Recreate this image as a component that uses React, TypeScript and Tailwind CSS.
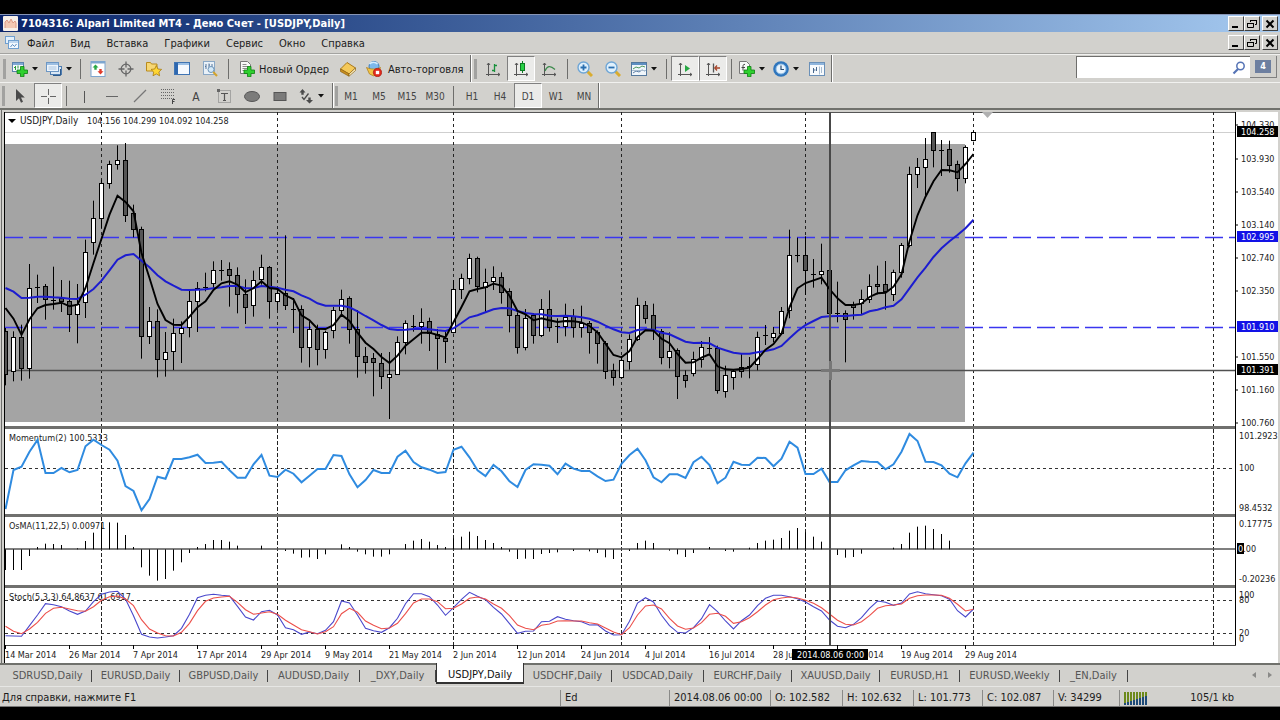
import type { ReactNode } from 'react';
import { clsx } from 'clsx';

type Kind = 'up' | 'down' | 'doji';
type Candle = [high: number, top: number, bottom: number, low: number, kind: Kind];

const STEP = 8;

// All series are stored at three units per pixel, measured down from the screen top of their block
const CANDLES: Candle[] = [
  [660, 670, 800, 832, 'down'], [670, 688, 790, 820, 'up'], [650, 688, 782, 818, 'down'], [468, 541, 782, 812, 'up'],
  [500, 538, 538, 585, 'doji'], [528, 536, 575, 635, 'down'], [476, 577, 577, 605, 'doji'], [516, 572, 580, 612, 'down'],
  [518, 580, 620, 672, 'down'], [528, 588, 620, 706, 'up'], [395, 433, 583, 630, 'up'], [278, 331, 403, 440, 'up'],
  [215, 227, 331, 360, 'up'], [158, 170, 227, 242, 'up'], [112, 157, 170, 185, 'up'], [105, 156, 322, 342, 'down'],
  [290, 316, 365, 388, 'down'], [356, 364, 686, 752, 'down'], [597, 640, 685, 708, 'up'], [604, 640, 755, 808, 'down'],
  [672, 733, 754, 806, 'up'], [632, 676, 731, 786, 'up'], [640, 661, 676, 765, 'up'], [548, 580, 658, 688, 'up'],
  [522, 541, 580, 672, 'up'], [494, 539, 539, 550, 'doji'], [460, 487, 526, 540, 'up'], [456, 486, 486, 518, 'doji'],
  [463, 485, 502, 596, 'down'], [478, 502, 559, 616, 'down'], [514, 559, 598, 648, 'down'], [488, 517, 592, 626, 'up'],
  [440, 479, 514, 530, 'up'], [474, 478, 580, 632, 'down'], [540, 556, 580, 606, 'up'], [382, 556, 593, 606, 'down'],
  [570, 603, 603, 675, 'doji'], [592, 604, 718, 764, 'down'], [640, 664, 718, 778, 'up'], [650, 664, 724, 772, 'down'],
  [668, 674, 724, 752, 'up'], [597, 607, 666, 691, 'up'], [545, 573, 607, 619, 'up'], [565, 571, 664, 707, 'down'],
  [606, 664, 746, 809, 'down'], [717, 744, 763, 797, 'down'], [735, 750, 763, 865, 'down'], [735, 765, 806, 843, 'down'],
  [732, 798, 808, 933, 'up'], [685, 703, 799, 801, 'up'], [637, 645, 703, 739, 'up'], [621, 654, 654, 671, 'doji'],
  [601, 643, 655, 707, 'up'], [629, 641, 677, 729, 'down'], [663, 679, 691, 785, 'down'], [667, 691, 701, 765, 'down'],
  [516, 543, 672, 676, 'up'], [497, 511, 545, 573, 'up'], [437, 451, 511, 529, 'up'], [446, 451, 536, 553, 'down'],
  [482, 523, 537, 613, 'up'], [475, 507, 519, 546, 'up'], [493, 507, 553, 587, 'down'], [541, 551, 621, 673, 'down'],
  [613, 621, 717, 737, 'down'], [603, 631, 717, 727, 'up'], [615, 621, 683, 707, 'down'], [573, 605, 682, 687, 'up'],
  [547, 603, 657, 671, 'down'], [631, 655, 655, 705, 'doji'], [587, 627, 655, 685, 'up'], [603, 626, 657, 689, 'down'],
  [593, 645, 657, 689, 'up'], [639, 645, 673, 737, 'down'], [667, 673, 707, 767, 'down'], [699, 705, 789, 813, 'down'],
  [767, 788, 808, 833, 'down'], [747, 756, 808, 811, 'up'], [679, 693, 761, 785, 'up'], [569, 591, 693, 699, 'up'],
  [579, 591, 631, 647, 'down'], [587, 623, 666, 696, 'down'], [663, 669, 749, 769, 'down'], [673, 731, 749, 781, 'up'],
  [721, 727, 805, 873, 'down'], [787, 803, 818, 839, 'down'], [731, 755, 796, 805, 'up'], [699, 718, 754, 779, 'up'],
  [687, 722, 722, 735, 'doji'], [713, 721, 847, 857, 'down'], [773, 802, 850, 869, 'up'], [785, 790, 809, 845, 'up'],
  [735, 779, 789, 809, 'down'], [747, 776, 776, 811, 'doji'], [671, 687, 769, 787, 'up'], [651, 683, 683, 711, 'doji'],
  [657, 677, 689, 703, 'up'], [597, 611, 676, 681, 'up'], [365, 442, 607, 631, 'up'], [389, 441, 441, 463, 'doji'],
  [385, 442, 487, 561, 'down'], [453, 499, 499, 539, 'doji'], [407, 490, 500, 529, 'up'], [476, 488, 617, 696, 'down'],
  [521, 615, 615, 643, 'doji'], [607, 615, 635, 763, 'down'], [581, 588, 598, 635, 'down'], [545, 574, 587, 621, 'up'],
  [499, 535, 573, 585, 'up'], [473, 529, 535, 559, 'down'], [459, 529, 549, 605, 'down'], [485, 494, 560, 579, 'up'],
  [405, 413, 494, 509, 'up'], [176, 200, 413, 418, 'up'], [150, 178, 200, 240, 'up'], [90, 154, 178, 262, 'up'],
  [72, 73, 128, 178, 'down'], [96, 126, 126, 204, 'doji'], [98, 124, 173, 194, 'down'], [158, 170, 212, 250, 'down'],
  [112, 118, 212, 226, 'up'], [70, 73, 98, 100, 'up'],
];

const FAST_MA = [
  600, 632, 681, 634, 601, 591, 588, 584, 595, 590, 540, 465, 392, 320, 263, 282, 310, 435, 510, 588, 636, 650, 651,
  626, 598, 580, 546, 526, 520, 530, 552, 541, 520, 540, 543, 562, 574, 622, 637, 662, 663, 651, 620, 639, 674, 704,
  723, 747, 765, 743, 713, 694, 674, 674, 681, 688, 643, 597, 550, 543, 538, 527, 533, 563, 609, 619, 637, 631, 637,
  642, 639, 640, 643, 654, 673, 707, 741, 748, 729, 687, 667, 668, 692, 706, 738, 764, 763, 749, 739, 775, 784, 785,
  783, 779, 753, 725, 708, 677, 598, 541, 525, 517, 509, 543, 571, 591, 591, 587, 567, 556, 554, 536, 499, 400, 322,
  266, 220, 186, 187, 193, 168, 138,
];

const SLOW_MA = [
  540, 551, 570, 569, 566, 566, 568, 569, 572, 573, 560, 543, 518, 487, 455, 442, 438, 458, 478, 502, 520, 533, 545,
  546, 545, 544, 541, 538, 534, 534, 541, 540, 534, 536, 539, 545, 550, 562, 572, 586, 593, 593, 593, 598, 610, 624,
  637, 651, 663, 666, 665, 663, 663, 664, 667, 669, 661, 645, 628, 622, 613, 604, 600, 601, 609, 615, 618, 619, 623,
  624, 623, 625, 628, 632, 641, 653, 664, 673, 675, 666, 664, 665, 674, 679, 690, 701, 705, 704, 706, 719, 727, 734,
  737, 737, 733, 729, 724, 714, 691, 669, 651, 639, 627, 625, 624, 624, 622, 620, 610, 605, 598, 593, 574, 541, 508,
  479, 447, 421, 400, 381, 361, 335,
];

const MOMENTUM = [
  252, 135, 125, 80, 45, 144, 144, 129, 142, 135, 64, 44, 60, 74, 107, 183, 198, 256, 222, 155, 161, 102, 102, 97, 89,
  114, 113, 110, 136, 158, 158, 118, 90, 152, 156, 134, 146, 172, 152, 132, 132, 90, 93, 148, 187, 165, 135, 144, 144,
  95, 77, 111, 127, 134, 144, 141, 74, 65, 97, 136, 153, 120, 139, 169, 186, 135, 118, 119, 122, 148, 116, 131, 138,
  138, 154, 168, 164, 116, 90, 71, 106, 157, 172, 148, 148, 159, 112, 95, 120, 175, 158, 110, 119, 120, 98, 99, 124,
  101, 50, 68, 147, 147, 131, 171, 171, 136, 121, 108, 110, 111, 133, 118, 80, 27, 48, 110, 111, 121, 146, 157, 115, 83,
];

const OSMA_ZERO = 373;
const OSMA = [
  435, 435, 435, 393, 366, 356, 357, 360, 373, 370, 348, 323, 305, 292, 293, 330, 366, 427, 452, 467, 462, 437, 412,
  384, 366, 357, 345, 345, 350, 362, 373, 373, 362, 373, 373, 378, 386, 398, 397, 402, 388, 373, 358, 366, 380, 388,
  395, 395, 388, 373, 357, 347, 342, 350, 360, 366, 340, 335, 320, 333, 345, 354, 366, 380, 402, 401, 402, 387, 384,
  382, 373, 378, 373, 379, 384, 397, 402, 373, 378, 354, 347, 354, 373, 377, 388, 396, 384, 373, 366, 373, 378, 380,
  373, 368, 354, 347, 344, 339, 317, 309, 322, 335, 350, 373, 390, 398, 396, 386, 373, 373, 373, 368, 357, 323, 305,
  302, 312, 327, 347, 373, 373, 373,
];

const STOCH_MAIN = [
  632, 633, 634, 602, 570, 536, 539, 545, 558, 568, 558, 530, 508, 501, 499, 522, 572, 628, 636, 639, 636, 632, 610,
  568, 518, 511, 508, 511, 513, 544, 576, 585, 560, 556, 570, 608, 614, 628, 621, 626, 616, 590, 528, 534, 570, 610,
  617, 622, 608, 580, 536, 506, 506, 515, 540, 571, 548, 523, 502, 514, 524, 547, 567, 596, 625, 619, 618, 590, 589,
  575, 583, 587, 590, 600, 599, 618, 630, 629, 589, 534, 518, 531, 571, 602, 622, 624, 608, 581, 539, 560, 588, 612,
  587, 570, 542, 520, 511, 511, 515, 521, 531, 545, 558, 585, 604, 608, 598, 578, 550, 528, 532, 541, 534, 507, 500,
  506, 509, 512, 523, 557, 576, 552,
];

const STOCH_SIGNAL = [
  604, 619, 626, 612, 592, 565, 550, 547, 552, 557, 559, 545, 526, 515, 513, 522, 542, 584, 612, 624, 632, 633, 622,
  595, 557, 529, 519, 516, 514, 532, 554, 568, 564, 560, 568, 586, 600, 614, 620, 627, 620, 605, 566, 550, 562, 588,
  601, 611, 609, 595, 566, 534, 522, 522, 530, 551, 550, 537, 520, 516, 522, 537, 550, 572, 600, 610, 614, 601, 597,
  588, 587, 588, 588, 593, 597, 609, 621, 629, 608, 570, 543, 540, 552, 580, 603, 613, 609, 593, 568, 565, 574, 595,
  590, 578, 560, 540, 524, 519, 516, 519, 526, 535, 548, 567, 586, 598, 600, 590, 572, 550, 542, 540, 537, 520, 512,
  510, 510, 511, 520, 538, 558, 553,
];

const MONTH_LINES = [96.5, 272.5, 448.5, 616.5, 800.5, 968.5, 1208.5];

const DATES = [
  '14 Mar 2014', '26 Mar 2014', '7 Apr 2014', '17 Apr 2014', '29 Apr 2014', '9 May 2014', '21 May 2014', '2 Jun 2014',
  '12 Jun 2014', '24 Jun 2014', '4 Jul 2014', '16 Jul 2014', '28 Jul 2014', '7 Aug 2014', '19 Aug 2014', '29 Aug 2014',
];

const PRICE_LABELS: [string, number][] = [
  ['104.330', 13], ['103.930', 47], ['103.540', 80], ['103.140', 113], ['102.740', 146], ['102.350', 179],
  ['101.550', 245], ['101.160', 278], ['100.760', 311],
];

const PRICE_TAGS: [string, number, string][] = [
  ['104.258', 19, '#000'], ['102.995', 124, '#1212e6'], ['101.910', 214, '#1212e6'], ['101.391', 257, '#000'],
];

const INDICATOR_LABELS: [string, number][] = [
  ['101.2923', 324], ['100', 356], ['98.4532', 396], ['0.17775', 412], ['-0.20236', 467],
  ['100', 483], ['80', 488], ['20', 521], ['0', 527],
];

const MENU = ['Файл', 'Вид', 'Вставка', 'Графики', 'Сервис', 'Окно', 'Справка'];

const TABS: [string, string][] = [
  ['SDRUSD,Daily', 'w-[88px]'], ['EURUSD,Daily', 'w-[88px]'], ['GBPUSD,Daily', 'w-[88px]'],
  ['AUDUSD,Daily', 'w-[92px]'], ['_DXY,Daily', 'w-[76px]'], ['USDJPY,Daily', 'w-[88px]'],
  ['USDCHF,Daily', 'w-[88px]'], ['USDCAD,Daily', 'w-[92px]'], ['EURCHF,Daily', 'w-[88px]'],
  ['XAUUSD,Daily', 'w-[88px]'], ['EURUSD,H1', 'w-20'], ['EURUSD,Weekly', 'w-[100px]'], ['_EN,Daily', 'w-[68px]'],
];

const x = (i: number) => 0.5 + i * STEP;
const y = (v: number, top: number) => v / 3 - top;
const snap = (v: number, top: number) => Math.floor(y(v, top)) + 0.5;
const line = (values: number[], top: number) =>
  values.map((v, i) => `${x(i)},${y(v, top).toFixed(1)}`).join(' ');

/* ---------- icons ---------- */

function Icon({ children, size = 16 }: { children: ReactNode; size?: number }) {
  return (
    <svg width={size} height={size} viewBox="0 0 16 16" fill="none" className="shrink-0" aria-hidden="true">
      {children}
    </svg>
  );
}

function Plus() {
  return <path d="M8.500 5.500h3.500v3.500h3.500v3.500h-3.500v3.200h-3.500v-3.200h-3.500v-3.500h3.500z" fill="#2fd02f" stroke="#0c7d12" strokeWidth=".8" />;
}

const NewChartIcon = () => (
  <Icon>
    <rect x=".5" y="1.500" width="11" height="9" fill="#f4f8fc" stroke="#5b83ad" />
    <path d="M1 3h10" stroke="#7fa8d4" strokeWidth="2" />
    <path d="M3.500 5v4M2 6.500h1.500M6 4.500v3" stroke="#2c9c3b" />
    <Plus />
  </Icon>
);

const ProfilesIcon = () => (
  <Icon>
    <rect x="4.500" y="5.500" width="11" height="8" fill="#dbe8f5" stroke="#4f7db0" />
    <rect x=".5" y="1.500" width="12" height="9" fill="#eef5fc" stroke="#6d97c4" />
    <path d="M1 3h11" stroke="#9dbfe2" strokeWidth="2" />
    <path d="M2.500 6h8M2.500 8h8" stroke="#a8c4e0" />
    <path d="M14.500 8v6.500H7" stroke="#2c5a8d" />
  </Icon>
);

const MarketWatchIcon = () => (
  <Icon>
    <rect x="1" y=".5" width="14" height="15" fill="#fff" stroke="#7ea6cf" />
    <path d="M1 1.500h14" stroke="#7ea6cf" strokeWidth="2" />
    <path d="M5.500 3.500 8.500 6.500H6.700v2.200H4.300V6.500H2.500z" fill="#28a745" />
    <path d="M10.500 13.500 7.500 10.300h1.800V8h2.400v2.300h1.800z" fill="#e03a2a" />
  </Icon>
);

const TargetIcon = () => (
  <Icon>
    <circle cx="8" cy="8" r="4.800" stroke="#666" strokeWidth="1.300" />
    <path d="M8 .5v6M8 9.500v6M.5 8h6M9.500 8h6" stroke="#666" strokeWidth="1.300" />
  </Icon>
);

const NavigatorIcon = () => (
  <Icon>
    <path d="M.5 1.500h4l1 1.500h5.500v7H.5z" fill="#f7d774" stroke="#b98b1c" />
    <path d="m10.300 4.500 1.600 3.500 3.700.4-2.700 2.600.7 3.800-3.300-1.900-3.300 1.900.7-3.800L5 8.400l3.700-.4z" fill="#ffd633" stroke="#a97b10" strokeWidth=".8" />
  </Icon>
);

const TerminalIcon = () => (
  <Icon>
    <rect x=".5" y="1.500" width="15" height="12" fill="#f5f9fe" stroke="#3f74b3" />
    <rect x="1" y="2" width="3" height="11" fill="#2e68b0" />
    <path d="M4 3h11" stroke="#9cc0e6" strokeWidth="2" />
  </Icon>
);

const TesterIcon = () => (
  <Icon>
    <rect x="1.500" y=".5" width="11" height="13" fill="#e9f1f8" stroke="#8aa8c6" />
    <path d="M4 3v5M7 2.500v4M10 3v5M3 5.500h1M7 4h1" stroke="#56779c" />
    <circle cx="9" cy="8.500" r="3" fill="#d4e9f8" stroke="#6d94b8" />
    <path d="m11.200 11 3.800 4" stroke="#d3a32c" strokeWidth="2" />
  </Icon>
);

const OrderIcon = () => (
  <Icon>
    <path d="M1.500.5h7l3 3v9h-10z" fill="#f8f8f8" stroke="#777" />
    <path d="M3.500 3.500h4M3.500 5.500h6M3.500 7.500h5M3.500 9.500h3" stroke="#8a8a8a" />
    <Plus />
  </Icon>
);

const BookIcon = () => (
  <Icon>
    <path d="M.5 8 7 1.500 15.500 7 9 13z" fill="#f4c95a" stroke="#a9781a" />
    <path d="M.5 8v2.500L9 15.200v-2.400z" fill="#c98f1f" stroke="#8b6212" strokeWidth=".7" />
    <path d="m9 15.200 6.500-5.700V7L9 13z" fill="#fff3c4" stroke="#8b6212" strokeWidth=".7" />
  </Icon>
);

const AutoTradeIcon = () => (
  <Icon>
    <circle cx="8" cy="5.500" r="5" fill="#7db8ea" stroke="#3d7cb8" />
    <path d="M3.500 3c2-2.500 6-2.500 8 0" stroke="#d4ecff" strokeWidth="1.500" />
    <path d="M.5 6.500c4 2 10 2 14 0l-1.500 4-5 4.500-4.500-2z" fill="#f2c547" stroke="#b1821a" strokeWidth=".8" />
    <circle cx="11.500" cy="11.500" r="4.200" fill="#e02a1c" stroke="#a3140c" strokeWidth=".6" />
    <rect x="9.800" y="9.800" width="3.400" height="3.400" fill="#fff" />
  </Icon>
);

const Axes = () => <path d="M3.500 2v13M1 13.500h14M2 4l1.500-2L5 4M13 12l2 1.500L13 15" stroke="#555" />;

const BarsIcon = () => (
  <Icon>
    <Axes />
    <path d="M9.500 3v8M7 9.500h2.500M9.500 4.500H12" stroke="#17903a" strokeWidth="1.300" />
  </Icon>
);

const CandlesIcon = () => (
  <Icon>
    <Axes />
    <path d="M9.500 0v12" stroke="#0d7a22" />
    <rect x="7.500" y="2.500" width="4" height="7" fill="#27d045" stroke="#0d7a22" />
  </Icon>
);

const LineChartIcon = () => (
  <Icon>
    <Axes />
    <path d="M4 10c2-5 5-6 10-1.500" stroke="#3c8a4c" strokeWidth="1.200" />
  </Icon>
);

function ZoomIcon({ plus }: { plus?: boolean }) {
  return (
    <Icon>
      <path d="m10 10 5 5" stroke="#d9ac2f" strokeWidth="3" />
      <circle cx="6.500" cy="6.500" r="5.500" fill="#dff0fc" stroke="#6fa6d6" strokeWidth="1.400" />
      <path d={plus ? 'M3.500 6.500h6M6.500 3.500v6' : 'M3.500 6.500h6'} stroke="#2a6fb0" strokeWidth="1.800" />
    </Icon>
  );
}

const TilesIcon = () => (
  <Icon>
    <rect x=".5" y="1.500" width="15" height="13" fill="#f0f6fb" stroke="#54789d" />
    <path d="M1 3h14" stroke="#5d8fc2" strokeWidth="2" />
    <path d="m2 8 3-2 3 1 3-2 3 1" stroke="#4f9a5f" />
    <path d="m2 12 3-2 3 1 3-2 3 1" stroke="#5c7fa6" />
    <path d="M1 9.500h14" stroke="#a9bdd1" />
  </Icon>
);

const AutoScrollIcon = () => (
  <Icon>
    <Axes />
    <path d="m8 4 5 3.500L8 11z" fill="#27a844" />
  </Icon>
);

const ShiftIcon = () => (
  <Icon>
    <Axes />
    <path d="M8.500 2.500v9" stroke="#555" strokeWidth="1.300" />
    <path d="M15 7h-5m2-2.500L9.800 7 12 9.500" stroke="#a8452a" strokeWidth="1.300" />
  </Icon>
);

const IndicatorsIcon = () => (
  <Icon>
    <path d="M.5.500h7l3 3v9H.5z" fill="#f8f8f8" stroke="#777" />
    <path d="M6 3.500c-1.500-.5-2 .5-2 2v4M2.500 6.500h3.500" stroke="#444" />
    <Plus />
  </Icon>
);

const ClockIcon = () => (
  <Icon>
    <circle cx="8" cy="8" r="7.800" fill="#2f76bd" />
    <circle cx="8" cy="8" r="5" fill="#e9f4fd" stroke="#8dbbe4" />
    <path d="M8 4.500V8.500h3" stroke="#2b4d73" strokeWidth="1.200" />
  </Icon>
);

const TemplateIcon = () => (
  <Icon>
    <rect x=".5" y="1.500" width="15" height="13" fill="#f7fafd" stroke="#6a90b8" />
    <path d="M1 3h14" stroke="#8fb5dc" strokeWidth="2" />
    <path d="M4.500 7v5M4.500 9h2M7.500 6v4" stroke="#48698e" />
    <path d="M10.500 5.500v8M12.500 6v6" stroke="#a9bdd1" />
  </Icon>
);

const CursorIcon = () => (
  <Icon>
    <path d="M4 1v12l3-2.800 2 4.600 2-1-2-4.300h3.800z" fill="#4a4a4a" />
  </Icon>
);

const CrossIcon = () => (
  <Icon>
    <path d="M8.500 1v6M8.500 10v6M1 8.500h6M10 8.500h6" stroke="#666" />
  </Icon>
);

const FiboIcon = () => (
  <Icon>
    <path d="M1 1.500h13M1 4.500h13M1 7.500h13M1 10.500h13" stroke="#666" strokeDasharray="1 1" />
    <path d="M12.500 16v-4.500H15M12.500 13.500h2" stroke="#444" />
  </Icon>
);

const TextBoxIcon = () => (
  <Icon>
    <rect x="2.500" y="2.500" width="12" height="12" stroke="#777" strokeDasharray="1 1" />
    <path d="M5 5.500h7M8.500 5.500v7M7 12.500h3" stroke="#555" strokeWidth="1.200" />
    <path d="M1 1h3v3H1z" fill="#666" />
  </Icon>
);

const ArrowsIcon = () => (
  <Icon>
    <path d="M4.500 1 7.500 4.500H5.700v2.200H3.300V4.500H1.500z" fill="#4a4a4a" />
    <path d="M11.500 15.500 8 12h2.300V9.500h2.400V12H15z" fill="#4a4a4a" />
    <path d="m4 9 2 2.500 4.500-6" stroke="#4a4a4a" strokeWidth="1.300" />
  </Icon>
);

/* ---------- window chrome ---------- */

function WindowButtons() {
  const base =
    'flex h-[15px] w-4 items-center justify-center border border-t-white border-l-white border-r-[#404040] border-b-[#404040] bg-[#d2d1cd]';
  return (
    <div className="ml-auto flex pr-0.5">
      <button className={base} aria-label="Свернуть">
        <svg width="10" height="10"><path d="M1 8h6" stroke="#000" strokeWidth="2" /></svg>
      </button>
      <button className={base} aria-label="Восстановить">
        <svg width="10" height="10" fill="none" stroke="#000">
          <path d="M3.500 3V1.500h6v4H8M3 1.500h7" />
          <path d="M.5 4.500h6v4h-6zM0 4.500h7" />
        </svg>
      </button>
      <button className={clsx(base, 'ml-0.5')} aria-label="Закрыть">
        <svg width="10" height="10"><path d="m1.500 1.500 7 7m0-7-7 7" stroke="#000" strokeWidth="2" /></svg>
      </button>
    </div>
  );
}

function TitleBar() {
  return (
    <header className="flex h-[18px] items-center border-t border-[#8795b5] bg-linear-to-r from-[#0b246a] to-[#a6caf0] pl-[3px]">
      <svg width="15" height="15" aria-hidden="true">
        <rect width="15" height="15" rx="1" fill="#f7efe8" />
        <path d="M2 12V6l2-2 2 3 2-4 2 4 2-2 1 2v5" fill="#f3c9b4" stroke="#dc9a86" />
      </svg>
      <h1 className="ml-[3px] pt-0.5 text-[11px] font-bold whitespace-pre text-white">
        7104316: Alpari Limited MT4 - Демо Счет - [USDJPY,Daily]
      </h1>
      <WindowButtons />
    </header>
  );
}

function MenuBar() {
  return (
    <nav className="flex h-[22px] items-center border-b border-[#a3a3a0] pl-[5px]">
      <svg width="14" height="14" fill="none" aria-hidden="true">
        <rect x=".5" y=".5" width="9" height="7" fill="#e4f0fb" stroke="#6f9fcf" />
        <rect x="3.500" y="4.500" width="10" height="8" fill="#f3f9ff" stroke="#6f9fcf" />
        <path d="M4 6h9" stroke="#8db6e0" />
        <path d="m5.500 11 2-2.500 2 2 2-2.500" stroke="#5b8cc0" />
      </svg>
      <div className="ml-2 flex gap-4 pt-1 text-[11px] text-[#1c1c1c]">
        {MENU.map((item) => (
          <button key={item}>{item}</button>
        ))}
      </div>
      <WindowButtons />
    </nav>
  );
}

function Separator({ className = 'w-2' }: { className?: string }) {
  return (
    <div className={clsx('flex shrink-0 justify-center', className)}>
      <div className="h-5 w-px bg-[#6e6e6c]" />
    </div>
  );
}

function Grip({ className = 'w-2' }: { className?: string }) {
  return (
    <div className={clsx('flex shrink-0 justify-center', className)}>
      <div className="h-5 w-[3px] bg-[#a2a2a0]" />
    </div>
  );
}

function GroupEnd() {
  return <div className="h-full w-0.5 shrink-0 border-r border-l border-r-white border-l-[#6e6e6c]" />;
}

interface ToolProps {
  label: string;
  children: ReactNode;
  pressed?: boolean;
  menu?: boolean;
}

function Tool({ label, children, pressed, menu }: ToolProps) {
  return (
    <button
      aria-label={label}
      className={clsx(
        'flex h-[25px] shrink-0 items-center',
        menu ? 'w-[34px] gap-1 pl-1' : 'w-7 justify-center',
        pressed && 'border border-t-[#808080] border-r-white border-b-white border-l-[#808080] bg-[#ebebe9]'
      )}
    >
      {children}
      {menu && (
        <svg width="6" height="4" aria-hidden="true"><path d="M0 0h6L3 3.500z" fill="#111" /></svg>
      )}
    </button>
  );
}

function StandardToolbar() {
  return (
    <div className="flex h-7 items-center border-t border-[#f1f1ef] text-[11px] text-[#1c1c1c]">
      <Grip />
      <Tool label="Новый график" menu><NewChartIcon /></Tool>
      <Tool label="Профили" menu><ProfilesIcon /></Tool>
      <Separator />
      <Tool label="Обзор рынка"><MarketWatchIcon /></Tool>
      <Tool label="Окно данных"><TargetIcon /></Tool>
      <Tool label="Навигатор"><NavigatorIcon /></Tool>
      <Tool label="Терминал"><TerminalIcon /></Tool>
      <Tool label="Тестер стратегий"><TesterIcon /></Tool>
      <Separator />
      <button className="flex w-[102px] shrink-0 items-center gap-1 pl-[7px] whitespace-nowrap">
        <OrderIcon />
        <span className="pt-[3px]">Новый Ордер</span>
      </button>
      <Tool label="MetaEditor"><BookIcon /></Tool>
      <button className="flex w-[108px] shrink-0 items-center gap-1.5 pl-1 whitespace-nowrap">
        <AutoTradeIcon />
        <span className="pt-[3px]">Авто-торговля</span>
      </button>
      <GroupEnd />
      <Grip className="w-[7px]" />
      <Tool label="Бары"><BarsIcon /></Tool>
      <Tool label="Свечи" pressed><CandlesIcon /></Tool>
      <Tool label="Линия"><LineChartIcon /></Tool>
      <Separator />
      <Tool label="Увеличить"><ZoomIcon plus /></Tool>
      <Tool label="Уменьшить"><ZoomIcon /></Tool>
      <Tool label="Расположение окон" menu><TilesIcon /></Tool>
      <Separator className="w-2.5" />
      <Tool label="Автопрокрутка" pressed><AutoScrollIcon /></Tool>
      <Tool label="Сдвиг графика" pressed><ShiftIcon /></Tool>
      <Separator />
      <Tool label="Индикаторы" menu><IndicatorsIcon /></Tool>
      <Tool label="Периоды" menu><ClockIcon /></Tool>
      <Tool label="Шаблоны"><TemplateIcon /></Tool>
      <GroupEnd />
      <div className="ml-auto flex h-full items-start pt-px pr-[3px]">
        <div className="flex h-[22px] w-[174px] items-center border-t border-l border-[#6e6e6c] bg-white">
          <input aria-label="Поиск" className="h-full min-w-0 flex-1 px-1 outline-none" />
          <svg width="14" height="14" viewBox="0 0 14 14" fill="none" className="mr-1" aria-hidden="true">
            <circle cx="8.500" cy="5" r="3.700" stroke="#5573b5" strokeWidth="1.500" />
            <path d="M6 8 1.500 12.500" stroke="#5573b5" strokeWidth="2.200" />
          </svg>
        </div>
        <button className="flex h-[22px] w-[27px] items-center justify-center border-r border-b border-[#808080]">
          <span className="h-[13px] w-4 bg-[#6d7fa0] text-center text-[9px] leading-[13px] font-bold text-white">
            4
          </span>
        </button>
      </div>
    </div>
  );
}

function Timeframes({ items, active }: { items: string[]; active?: string }) {
  return items.map((tf) => (
    <Tool key={tf} label={tf} pressed={tf === active}>
      <span className="pt-0.5 text-[10px] text-[#444]">{tf}</span>
    </Tool>
  ));
}

function DrawingToolbar() {
  return (
    <div className="flex h-[26px] items-center border-t border-[#f1f1ef]">
      <Grip className="w-1.5" />
      <Tool label="Курсор"><CursorIcon /></Tool>
      <Tool label="Перекрестие" pressed><CrossIcon /></Tool>
      <Separator />
      <Tool label="Вертикальная линия"><Icon><path d="M8.500 3v12" stroke="#555" /></Icon></Tool>
      <Tool label="Горизонтальная линия"><Icon><path d="M2 8.500h12" stroke="#666" /></Icon></Tool>
      <Tool label="Трендовая линия"><Icon><path d="M2 14 14 2" stroke="#777" strokeWidth="1.300" /></Icon></Tool>
      <Tool label="Фибоначчи"><FiboIcon /></Tool>
      <Tool label="Текст"><span className="pt-0.5 text-xs text-[#444]">A</span></Tool>
      <Tool label="Текстовая метка"><TextBoxIcon /></Tool>
      <Tool label="Эллипс">
        <Icon><ellipse cx="8" cy="8.500" rx="7.500" ry="5" fill="#7b7b7a" stroke="#555" /></Icon>
      </Tool>
      <Tool label="Прямоугольник">
        <Icon><rect x="2" y="4.500" width="12" height="8" fill="#7b7b7a" stroke="#555" /></Icon>
      </Tool>
      <Tool label="Стрелки" menu><ArrowsIcon /></Tool>
      <div className="flex h-full w-[9px] items-center pl-1">
        <GroupEnd />
        <Grip className="w-[5px]" />
      </div>
      <Timeframes items={['M1', 'M5', 'M15', 'M30']} />
      <Separator className="w-[9px]" />
      <Timeframes items={['H1', 'H4', 'D1', 'W1', 'MN']} active="D1" />
      <GroupEnd />
    </div>
  );
}

/* ---------- chart ---------- */

function MonthLines({ dash = '4 2' }: { dash?: string }) {
  return MONTH_LINES.map((mx) => (
    <line key={mx} x1={mx} x2={mx} y1="0" y2="100%" stroke="#222" strokeDasharray={dash} />
  ));
}

function Level({ at }: { at: number }) {
  return <line x1="0" x2="100%" y1={at} y2={at} stroke="#333" strokeDasharray="3 3" />;
}

function PriceChart() {
  return (
    <svg className="block h-[314px] w-full">
      <line x1="0" x2="100%" y1=".5" y2=".5" stroke="#555" />
      <line x1="0" x2="100%" y1="20.500" y2="20.500" stroke="#cfcfcf" />
      <rect y="32" width="960" height="278" fill="#a4a4a4" />
      <MonthLines dash="3 3" />
      {[125.5, 215.5].map((ly) => (
        <line key={ly} x1="0" x2="100%" y1={ly} y2={ly} stroke="#3a36f0" strokeWidth="1.500" strokeDasharray="18 6" />
      ))}
      <line x1="0" x2="100%" y1="258.500" y2="258.500" stroke="#505050" strokeWidth="1.400" />
      {CANDLES.map(([high, top, bottom, low, kind], i) => (
        <g key={i} stroke="#000">
          <line x1={x(i)} x2={x(i)} y1={y(high, 4)} y2={y(low, 4)} />
          {kind === 'doji' ? (
            <line x1={x(i) - 2.5} x2={x(i) + 2.5} y1={snap(top, 4)} y2={snap(top, 4)} />
          ) : (
            <rect
              x={x(i) - 2}
              y={snap(top, 4)}
              width="4"
              height={snap(bottom, 4) - snap(top, 4)}
              fill={kind === 'up' ? '#fff' : '#555'}
            />
          )}
        </g>
      ))}
      <polyline points={line(SLOW_MA, 4)} fill="none" stroke="#1c1cd0" strokeWidth="2" />
      <polyline points={line(FAST_MA, 4)} fill="none" stroke="#000" strokeWidth="1.900" />
      <path d="M977 0h11l-5.500 6z" fill="#b0b0b0" />
      <path d="M3 7h8l-4 4z" fill="#000" />
      <text x="15" y="12" className="text-[10px]">USDJPY,Daily</text>
      <text x="82" y="12">104.156 104.299 104.092 104.258</text>
    </svg>
  );
}

function MomentumChart() {
  return (
    <svg className="block h-[85px] w-full">
      <text x="4" y="12">Momentum(2) 100.5313</text>
      <MonthLines />
      <Level at={39.5} />
      <polyline points={line(MOMENTUM, 4)} fill="none" stroke="#2f8be0" strokeWidth="2" />
    </svg>
  );
}

function OsmaChart() {
  return (
    <svg className="block h-[68px] w-full">
      <text x="4" y="12">OsMA(11,22,5) 0.00971</text>
      <MonthLines />
      <line x1="0" x2="100%" y1="32" y2="32" stroke="#555" strokeWidth="1.500" />
      {OSMA.map((v, i) =>
        v === OSMA_ZERO ? null : (
          <line key={i} x1={x(i)} x2={x(i)} y1={y(OSMA_ZERO, 92)} y2={y(v, 92)} stroke="#000" />
        )
      )}
    </svg>
  );
}

function StochChart() {
  return (
    <svg className="block h-[57px] w-full">
      <text x="4" y="12">Stoch(5,3,3) 64.8637 61.6917</text>
      <MonthLines />
      <Level at={12.5} />
      <Level at={45.5} />
      <polyline points={line(STOCH_MAIN, 163)} fill="none" stroke="#4a48cc" strokeWidth="1.100" />
      <polyline points={line(STOCH_SIGNAL, 163)} fill="none" stroke="#ec4f4a" strokeWidth="1.100" />
    </svg>
  );
}

function Crosshair() {
  return (
    <svg className="pointer-events-none absolute inset-0 h-full w-full" aria-hidden="true">
      <rect x="824" width="2" height="100%" fill="#484848" />
      <path d="M816 258.500h19M825.500 249v19" stroke="#777" strokeWidth="3" />
    </svg>
  );
}

function ValueAxis() {
  return (
    <svg className="block h-[533px] w-[43px] shrink-0 border-l border-black">
      {PRICE_LABELS.map(([label, ty]) => (
        <g key={label}>
          <line x1="0" x2="2" y1={ty} y2={ty} stroke="#000" />
          <text x="5" y={ty + 3}>{label}</text>
        </g>
      ))}
      {PRICE_TAGS.map(([label, ty, fill]) => (
        <g key={label}>
          <rect x="1" y={ty - 5} width="41" height="11" fill={fill} />
          <text x="5" y={ty + 4} className="fill-white">{label}</text>
        </g>
      ))}
      {INDICATOR_LABELS.map(([label, ty]) => (
        <text key={ty} x="3" y={ty + 3}>{label}</text>
      ))}
      <rect x="1" y="431" width="7" height="11" fill="#000" />
      <text x="2" y="440">
        <tspan className="fill-white">0</tspan>.00
      </text>
    </svg>
  );
}

function TimeAxis() {
  return (
    <svg className="block h-[18px] w-full">
      <line x1="0" x2="1231" y1=".5" y2=".5" stroke="#444" />
      {DATES.map((date, k) => (
        <g key={date}>
          <line x1={x(k * 8)} x2={x(k * 8)} y1="0" y2="4" stroke="#000" />
          <text x={k * 64} y="13">{date}</text>
        </g>
      ))}
      <rect x="787" y="4" width="76" height="11" fill="#000" />
      <text x="792" y="13" className="fill-white">2014.08.06 0:00</text>
    </svg>
  );
}

function ChartWindow() {
  return (
    <main className="border-t-2 border-b-2 border-[#70716c] bg-[#d2d1cd] pl-px">
      <div className="border-l border-[#6e6e6c] pt-0.5 pl-0.5">
        <div className="mr-0.5 border-l border-black bg-white fill-[#222] text-[9px]">
          <div className="flex">
            <div className="relative min-w-0 flex-1">
              <PriceChart />
              <div className="h-[3px] bg-[#70706e]" />
              <MomentumChart />
              <div className="h-[3px] bg-[#70706e]" />
              <OsmaChart />
              <div className="h-[3px] bg-[#70706e]" />
              <StochChart />
              <Crosshair />
            </div>
            <ValueAxis />
          </div>
          <TimeAxis />
        </div>
      </div>
    </main>
  );
}

/* ---------- bottom bars ---------- */

function ChartTabs() {
  return (
    <div className="flex h-[22px] items-start border-b border-[#e6e6e4] pl-1 text-[11px] text-[#555]">
      {TABS.map(([name, width]) =>
        name === 'USDJPY,Daily' ? (
          <button
            key={name}
            className={clsx('-mt-0.5 h-[21px] shrink-0 border-r border-b-2 border-l border-[#333] bg-white pt-1 text-[#111]', width)}
          >
            {name}
          </button>
        ) : (
          <button key={name} className={clsx('flex h-5 shrink-0 items-center justify-center pt-0.5', width)}>
            <span className="flex-1">{name}</span>
            <span className="h-3 w-px bg-[#444]" />
          </button>
        )
      )}
      <div className="ml-auto flex h-5 items-center gap-3 pr-2">
        <svg width="4" height="6" aria-hidden="true"><path d="M4 0v6L0 3z" fill="#8a8a88" /></svg>
        <svg width="4" height="6" aria-hidden="true"><path d="M0 0v6l4-3z" fill="#8a8a88" /></svg>
      </div>
    </div>
  );
}

function StatusCell({ className, children }: { className: string; children: ReactNode }) {
  return (
    <div className={clsx('flex h-4 shrink-0 items-center border-l border-[#8a8a88] pt-0.5 pl-1', className)}>
      {children}
    </div>
  );
}

function StatusBar() {
  return (
    <footer className="flex h-5 items-center border-b border-[#777] pt-0.5 text-[11px] whitespace-nowrap text-[#1c1c1c]">
      <span className="min-w-0 flex-1 pt-0.5 pl-0.5">Для справки, нажмите F1</span>
      <StatusCell className="w-[109px]">Ed</StatusCell>
      <StatusCell className="w-[101px]">2014.08.06 00:00</StatusCell>
      <StatusCell className="w-[72px]">O: 102.582</StatusCell>
      <StatusCell className="w-[71px]">H: 102.632</StatusCell>
      <StatusCell className="w-[69px]">L: 101.773</StatusCell>
      <StatusCell className="w-[71px]">C: 102.087</StatusCell>
      <StatusCell className="w-[66px]">V: 34299</StatusCell>
      <StatusCell className="w-[161px]">
        <svg width="23" height="13" aria-hidden="true">
          {[0, 1, 2, 3, 4, 5, 6, 7].map((n) => (
            <g key={n}>
              <rect x={n * 3} width="2" height="13" fill="#6d8a1c" />
              <rect x={n * 3} y={11 - n} width="2" height={2 + n} fill="#1d4a78" />
            </g>
          ))}
        </svg>
        <span className="ml-auto pr-[46px]">105/1 kb</span>
      </StatusCell>
    </footer>
  );
}

export default function App() {
  return (
    <div className="min-h-screen overflow-x-hidden bg-black py-3.5 font-['DejaVu_Sans_Condensed','DejaVu_Sans',sans-serif]">
      <div className="bg-[#d2d1cd]">
        <TitleBar />
        <MenuBar />
        <StandardToolbar />
        <DrawingToolbar />
        <ChartWindow />
        <ChartTabs />
        <StatusBar />
      </div>
    </div>
  );
}
